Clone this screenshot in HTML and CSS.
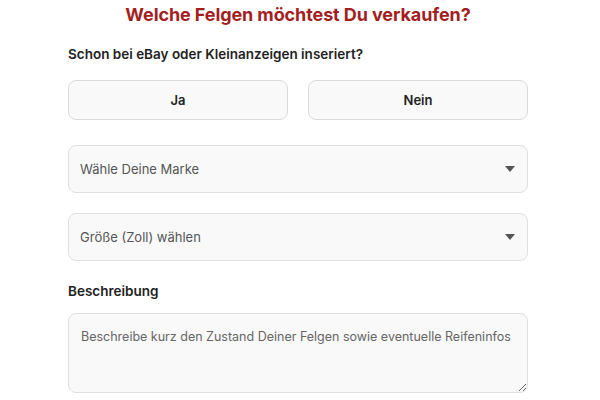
FILE: index.html
```html
<!DOCTYPE html>
<html lang="de">
<head>
<meta charset="utf-8">
<link rel="stylesheet" href="styles.css">
</head>
<body>
<main class="form">
  <h1 class="title">Welche Felgen möchtest Du verkaufen?</h1>
  <p class="label">Schon bei eBay oder Kleinanzeigen inseriert?</p>
  <div class="choices">
    <button class="choice">Ja</button>
    <button class="choice">Nein</button>
  </div>
  <div class="select">
    <span>Wähle Deine Marke</span>
    <svg class="arrow" width="10" height="6" viewBox="0 0 10 6"><path d="M0 0H10L5 6Z" fill="#555"/></svg>
  </div>
  <div class="select">
    <span>Größe (Zoll) wählen</span>
    <svg class="arrow" width="10" height="6" viewBox="0 0 10 6"><path d="M0 0H10L5 6Z" fill="#555"/></svg>
  </div>
  <p class="label label-desc">Beschreibung</p>
  <textarea class="desc" placeholder="Beschreibe kurz den Zustand Deiner Felgen sowie eventuelle Reifeninfos"></textarea>
</main>
</body>
</html>
```
FILE: styles.css
```css
* { box-sizing: border-box; }
html, body { margin: 0; padding: 0; background: #fff; }
body { font-family: Inter, "Noto Sans", sans-serif; color: #222; }
.form {
  width: 460px;
  margin: 0 auto 0 68px;
  display: flex;
  flex-direction: column;
}
.title {
  margin: 4px 0 0;
  font-size: 18px;
  line-height: 22px;
  font-weight: 700;
  color: #a31e22;
  text-align: center;
  letter-spacing: -0.1px;
}
.label {
  margin: 19px 0 0;
  font-size: 13.5px;
  line-height: 18px;
  font-weight: 600;
  color: #222;
}
.choices {
  display: grid;
  grid-template-columns: 1fr 1fr;
  gap: 20px;
  margin-top: 17px;
}
.choice {
  height: 40px;
  border: 1px solid #d9d9d9;
  border-radius: 8px;
  background: #f9f9f9;
  font-family: inherit;
  font-size: 13px;
  font-weight: 600;
  color: #222;
}
.select {
  height: 48px;
  margin-top: 25px;
  border: 1px solid #e0e0e0;
  border-radius: 8px;
  background: #f9f9f9;
  display: flex;
  align-items: center;
  justify-content: space-between;
  padding: 0 12px 0 11px;
  font-size: 13px;
  color: #555;
}
.select + .select { margin-top: 20px; }
.label-desc { margin-top: 21px; }
.desc {
  margin-top: 13px;
  height: 80px;
  border: 1px solid #e0e0e0;
  border-radius: 8px;
  background: #f9f9f9;
  padding: 14px 12px;
  font-family: inherit;
  font-size: 12.5px;
  line-height: 18px;
  color: #555;
  resize: vertical;
}
.desc::placeholder { color: #666; }
```
